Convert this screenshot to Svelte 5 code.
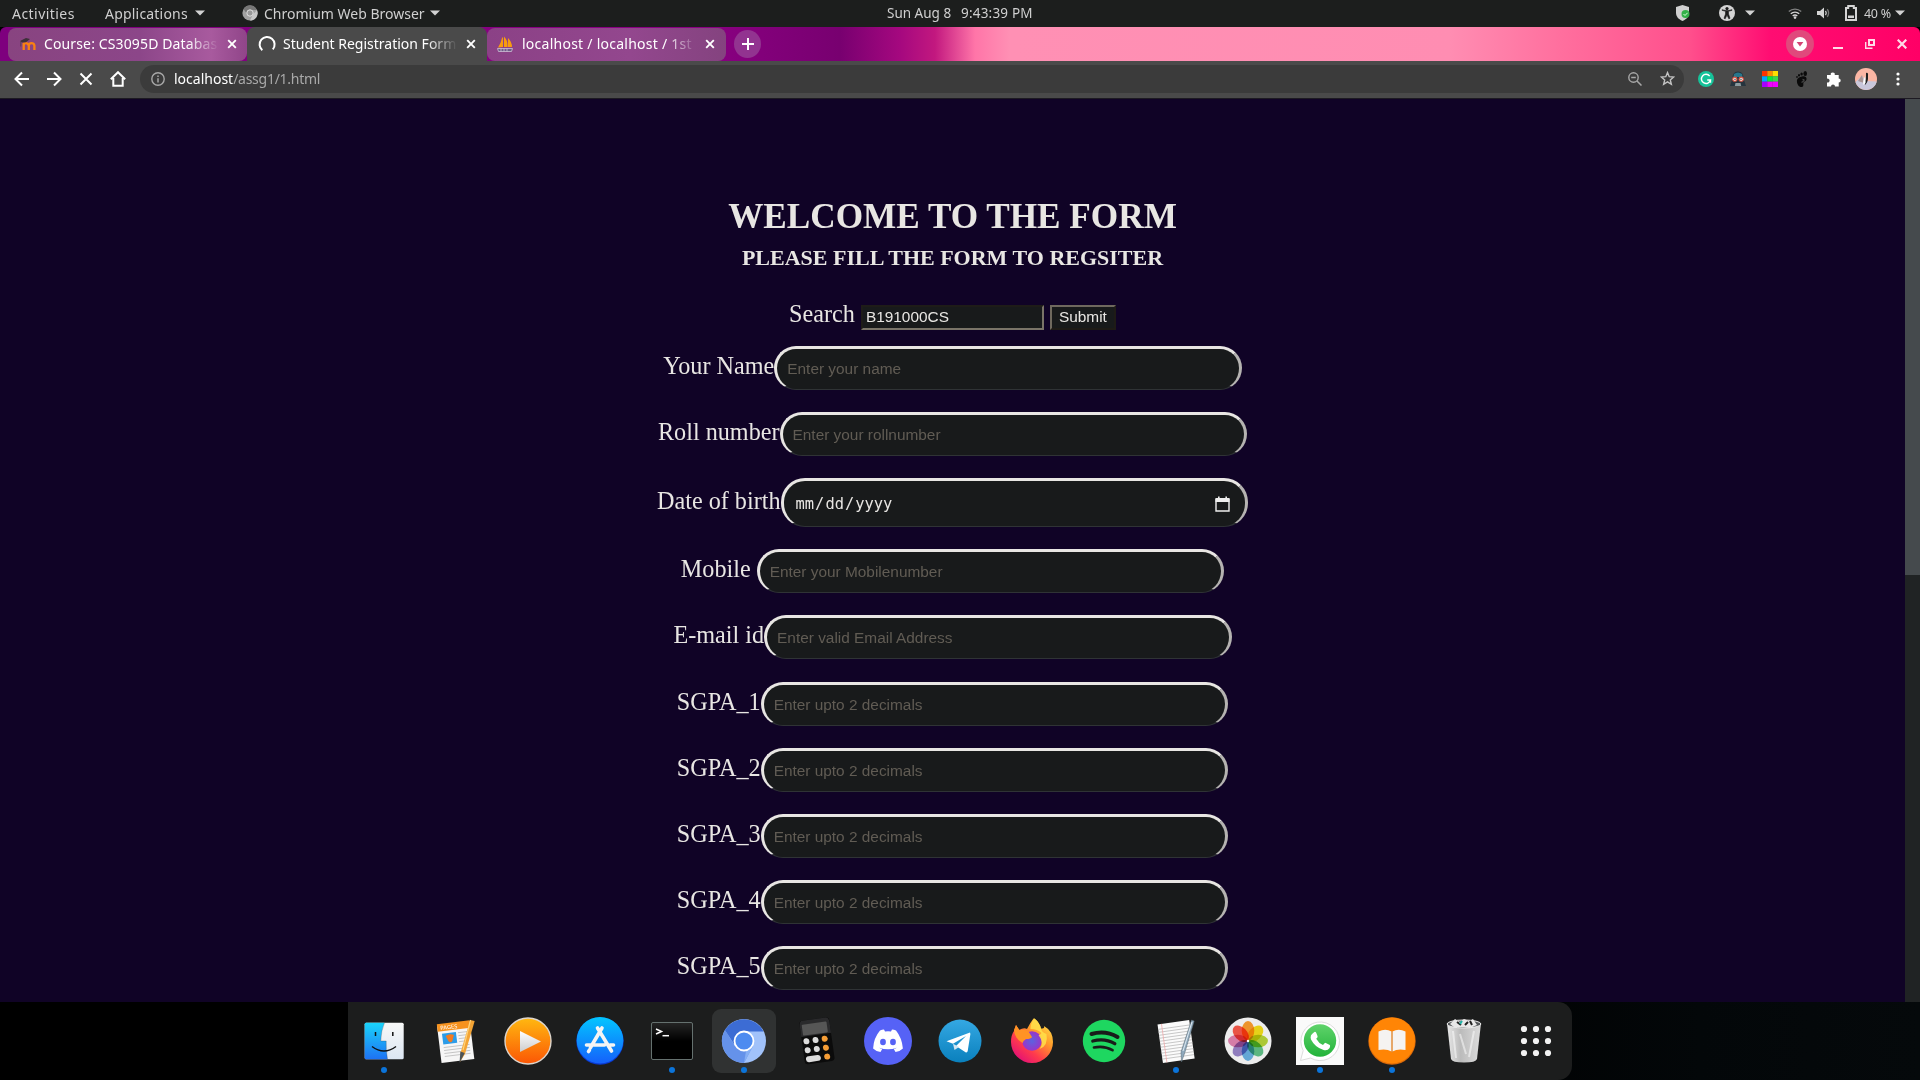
<script>
  const fields = [
    { label: 'Your Name', hint: 'Enter your name' },
    { label: 'Roll number', hint: 'Enter your rollnumber' },
    { label: 'Date of birth', date: true },
    { label: 'Mobile\u00a0', hint: 'Enter your Mobilenumber' },
    { label: 'E-mail id', hint: 'Enter valid Email Address' },
    ...[1, 2, 3, 4, 5].map((n) => ({ label: `SGPA_${n}`, hint: 'Enter upto 2 decimals' })),
  ];
  const apps = [
    { id: 'finder', open: true }, { id: 'pages' }, { id: 'player' }, { id: 'store' },
    { id: 'terminal', open: true }, { id: 'chromium', open: true, active: true },
    { id: 'calculator' }, { id: 'discord' }, { id: 'telegram' }, { id: 'firefox' },
    { id: 'spotify' }, { id: 'notes', open: true }, { id: 'photos' },
    { id: 'whatsapp', open: true }, { id: 'books', open: true }, { id: 'trash' }, { id: 'grid' },
  ];
  const petals = ['#ff9f2e', '#f7e11a', '#b9d83a', '#62c48a', '#6cb4e6', '#9a86cc', '#e587b4', '#fb5a4a'];
  const swatches = ['#ff3200', '#ff8a00', '#ffdc00', '#00a8ff', '#0be63c', '#3ad94a', '#a800ff', '#f000ff', '#f000ff'];
</script>

{#snippet caret()}
  <svg class="caret" viewBox="0 0 10 6"><path d="M0 .5h10L5 5.5z" fill="#d2d2d2" /></svg>
{/snippet}
{#snippet cross()}
  <svg class="cross" viewBox="0 0 10 10"><path d="M1.2 1.2l7.6 7.6M8.8 1.2L1.2 8.8" stroke="#fff" stroke-width="1.9" /></svg>
{/snippet}

<div class="screen">
  <header class="panel">
    <span class="activities">Activities</span>
    <span class="applications">Applications</span>
    {@render caret()}
    <svg class="chromelet" viewBox="0 0 16 16">
      <circle cx="8" cy="8" r="7.6" fill="#a2a2a2" /><path d="M1.5 4A7.6 7.6 0 0 1 15 5H8L5 9z" fill="#777" /><path d="M15 5a7.6 7.6 0 0 1-7 10.600l3-6z" fill="#c8c8c8" />
      <circle cx="8" cy="8" r="3.2" fill="#999" stroke="#e2e2e2" />
    </svg>
    <span class="appname">Chromium Web Browser</span>
    {@render caret()}
    <span class="day">Sun Aug 8</span><span class="clock">9:43:39 PM</span>
    <div class="tray">
      <svg class="shield" viewBox="0 0 14 16"><path d="M6.500 0 13 2v6c0 3-2 6-6.500 8C2 14 0 11 0 8V2z" fill="#d0d0d0" /><circle cx="9.500" cy="9" r="4" fill="#34b14a" /><path d="M7.500 9l1.500 1.500L11.600 7.800" stroke="#d8ffd8" fill="none" /></svg>
      <svg class="access" viewBox="0 0 16 16"><circle cx="8" cy="8" r="8" fill="#d4d4d4" /><circle cx="8" cy="3.600" r="1.600" fill="#1c1c1c" /><path d="M3 5.300l3.500 1v2.700L5 13.300l1.200.5L8 10l1.800 3.800 1.200-.5L9.500 9V6.300l3.500-1v-.6L9 5.600H7L3 4.700z" fill="#1c1c1c" stroke="#1c1c1c" stroke-width=".6" /></svg>
      {@render caret()}
      <svg class="wifi" viewBox="0 0 14 12"><g fill="none" stroke="#d4d4d4" stroke-width="1.400"><path d="M.8 4.600a9 9 0 0 1 12.400 0" opacity=".55" /><path d="M2.800 6.800a6 6 0 0 1 8.400 0" /><path d="M4.700 9a3.500 3.500 0 0 1 4.600 0" /></g><circle cx="7" cy="10.600" r="1.300" fill="#d4d4d4" /></svg>
      <svg class="volume" viewBox="0 0 13 12"><path d="M0 4h3l4-3.500v11L3 8H0z" fill="#d4d4d4" /><path d="M8.500 3.800q1.500 2.200 0 4.400" fill="none" stroke="#d4d4d4" stroke-width="1.300" /><path d="M10.300 2.200q2.600 3.800 0 7.600" fill="none" stroke="#777" stroke-width="1.300" /></svg>
      <svg class="battery" viewBox="0 0 12 16"><path d="M1 3h2.200V1h5.600v2H11v12H1z" fill="none" stroke="#d4d4d4" stroke-width="2" /><path d="M3 10.500h6V13H3z" fill="#d4d4d4" /></svg>
      <span class="charge">40 %</span>
      {@render caret()}
    </div>
  </header>

  <nav class="tabs">
    <div class="tab first">
      <svg class="fav" viewBox="0 0 16 16"><path d="M3.700 14V6.500M3.700 14V9.500q.2-2.300 2.200-2.300t2.900 2.300V14M8.800 9.500q.3-2.300 2.700-2.300t2.900 2.300V14" fill="none" stroke="#f98012" stroke-width="2.300" /><path d="M0 5l6-3 4 1-4 3.200-4 .2z" fill="#3d3039" /><path d="M.8 5.500v5" stroke="#5b4350" /></svg>
      <span class="caption c1">Course: CS3095D Databas</span>{@render cross()}
    </div>
    <div class="tab active">
      <svg class="spin" viewBox="0 0 18 18"><path d="M4.300 15.200A7.500 7.500 0 1 1 14.800 14.300" fill="none" stroke="#fff" stroke-width="2" /></svg>
      <span class="caption c2">Student Registration Form</span>{@render cross()}
    </div>
    <div class="tab third">
      <svg class="fav" viewBox="0 0 16 16"><path d="M6 1v10L1 11.500Q4 7 5 2M7 .5q4 4 3.500 10.500H7M11 2q4 4 4 9h-4" fill="#f89c0e" /><path d="M.500 12.500l1 3h13l1-3zM4 12.500v3m3-3v3m3-3v3" fill="#6e5c88" stroke="#d8cfe0" stroke-width=".7" /></svg>
      <span class="caption c3">localhost / localhost / 1st</span>{@render cross()}
    </div>
    <div class="plus"><svg viewBox="0 0 12 12"><path d="M6 0v12M0 6h12" stroke="#fff" stroke-width="2" /></svg></div>
    <div class="winctl">
      <svg class="drop" viewBox="0 0 28 28"><circle cx="14" cy="14" r="14" fill="#e0497c" /><circle cx="14" cy="14" r="7" fill="#fff" /><path d="M10.600 12h6.800L14 16.600z" fill="#d44373" /></svg>
      <svg class="w10" viewBox="0 0 10 10"><path d="M0 9h10" stroke="#ffdbe8" stroke-width="2" /></svg>
      <svg class="w10" viewBox="0 0 10 10"><path d="M4 1h5v5H4z" fill="none" stroke="#ffdbe8" stroke-width="2" /><path d="M.7 3v6.300H7.500" fill="none" stroke="#ffdbe8" stroke-width="1.400" /></svg>
      <svg class="w10" viewBox="0 0 10 10"><path d="M.7.7l8.600 8.600M9.300.7L.7 9.300" stroke="#ffdbe8" stroke-width="2.200" /></svg>
    </div>
  </nav>

  <div class="toolbar">
    <svg class="nav" viewBox="0 0 16 16"><path d="M15 8H2M8 1.500L1.500 8 8 14.500" /></svg>
    <svg class="nav" viewBox="0 0 16 16"><path d="M1 8h13M8 1.500L14.500 8 8 14.500" /></svg>
    <svg class="nav" viewBox="0 0 16 16"><path d="M2.500 2.500l11 11M13.500 2.500l-11 11" /></svg>
    <svg class="nav" viewBox="0 0 16 16"><path d="M.8 8.200L8 1.200l7.200 7M3.300 7v7.800h9.400V7" /></svg>
    <div class="omnibox">
      <svg class="info" viewBox="0 0 14 14"><circle cx="7" cy="7" r="6.200" fill="none" stroke="#a8a8a8" stroke-width="1.400" /><path d="M7 6.200v4.300M7 3.400v1.500" stroke="#a8a8a8" stroke-width="1.500" /></svg>
      <span class="url"><b>localhost</b>/assg1/1.html</span>
      <svg class="mag" viewBox="0 0 14 14"><circle cx="5.500" cy="5.500" r="4.700" fill="none" stroke="#a8a8a8" stroke-width="1.400" /><path d="M3.200 5.500h4.600M9 9l4.500 4.500" stroke="#a8a8a8" stroke-width="1.500" /></svg>
      <svg class="star" viewBox="0 0 14 14"><path d="M7 1.500l1.600 3.800 4.200.3-3.200 2.700 1 4.100L7 10.200l-3.600 2.200 1-4.100L1.200 5.600l4.200-.3z" fill="none" stroke="#c4c4c4" stroke-width="1.300" /></svg>
    </div>
    <div class="exts">
      <svg viewBox="0 0 16 16"><circle cx="8" cy="8" r="8" fill="#15c39a" /><path d="M11.700 5.100A4.600 4.600 0 1 0 12.500 9H9.200M12.500 9v2.700" fill="none" stroke="#fff" stroke-width="1.400" /></svg>
      <svg viewBox="0 0 16 16"><path d="M8 .5c4 0 5.500 3 5.500 7L16 15H0l2.500-7.500c0-4 1.500-7 5.500-7z" fill="#26343e" /><path d="M4 3q4-3 8 0l.5 3h-9z" fill="#28778c" /><path d="M5.500 12h5l.7 3H4.800z" fill="#8b9a9e" /><circle cx="4.800" cy="8.200" r="2.100" fill="#fff" stroke="#d8513f" stroke-width="1.100" /><circle cx="11.200" cy="8.200" r="2.100" fill="#fff" stroke="#d8513f" stroke-width="1.100" /><circle cx="5" cy="8.200" r=".7" fill="#222" /><circle cx="11" cy="8.200" r=".7" fill="#222" /></svg>
      <svg viewBox="0 0 16 16">{#each swatches as c, i}<rect x={(i % 3) * 5.33} y={Math.floor(i / 3) * 5.33} width="5.400" height="5.400" fill={c} />{/each}</svg>
      <svg viewBox="0 0 16 16"><path d="M8 5.500c3-.8 5 .6 4.500 3-.4 2-3 2-3.200 3.500-.1 1 .7 3.500-1.500 4C4.500 16.500 2.500 12 3 9c.4-2 2.500-3 5-3.500z" fill="#0a0a0a" /><path d="M8.500 8.500q2 0 1.500 1.300L7.500 11.500" stroke="#444" stroke-width="1.300" fill="none" /><ellipse cx="11.200" cy="2.500" rx="1.800" ry="2.500" fill="#0a0a0a" /><ellipse cx="7.600" cy="3" rx="1.200" ry="1.600" fill="#0a0a0a" /><ellipse cx="5" cy="4.300" rx="1" ry="1.300" fill="#0a0a0a" /><ellipse cx="3" cy="6" rx=".8" ry="1.100" fill="#0a0a0a" /></svg>
      <svg viewBox="0 0 16 16"><path d="M1 4h3.800a2 2 0 1 1 3.900 0h4v3.600a2 2 0 1 1 0 4V15.500H9a2 2 0 1 0-4 0H1V11.500a2 2 0 1 0 0-3.800z" fill="#fff" /></svg>
      <svg class="avatar" viewBox="0 0 22 22"><circle cx="11" cy="11" r="11" fill="#fbb6a4" /><path d="M.5 14L7 8l4 5 10.800.5A11 11 0 0 1 .5 14z" fill="#c9c7db" /><path d="M3 13l4-6 2 8z" fill="#a89493" /><path d="M11 5q2.500-1 2 3 .5 6-3 9-1-3 .3-6 1-3 .7-6z" fill="#222" /><path d="M10.300 8q-3 5-1.800 9l2-2q.5-4-.2-7z" fill="#fff" /></svg>
      <svg class="menu" viewBox="0 0 4 14"><circle cx="2" cy="2" r="1.600" /><circle cx="2" cy="7" r="1.600" /><circle cx="2" cy="12" r="1.600" /></svg>
    </div>
  </div>

  <div class="viewport">
    <main>
      <h1>WELCOME TO THE FORM</h1>
      <h3>PLEASE FILL THE FORM TO REGSITER</h3>
      <div class="search">
        <span class="label">Search</span>
        <input class="query" value="B191000CS" />
        <button>Submit</button>
      </div>
      {#each fields as f}
        <div class="row" class:tall={f.date}>
          <span class="label">{f.label}</span>
          {#if f.date}
            <div class="field date">
              <span class="mask">mm<i>/</i>dd<i>/</i>yyyy</span>
              <svg viewBox="0 0 15 16"><path d="M1 3.500h13V15H1z" fill="none" stroke="#eee" stroke-width="1.400" /><path d="M.5 2h14v4H.5zM3 .5h1.600V3H3zM10.400.5H12V3h-1.600z" fill="#eee" /></svg>
            </div>
          {:else}
            <input class="field" placeholder={f.hint} />
          {/if}
        </div>
      {/each}
    </main>
    <div class="scroll"><div class="thumb"></div></div>
  </div>

  <footer>
    <div class="dock">
      {#each apps as app}
        <div class="app" class:current={app.active}>
          <svg viewBox="0 0 48 48">
            {#if app.id === 'finder'}
              <defs><linearGradient id="fb" x2="0" y2="1"><stop stop-color="#1ad4fb" /><stop offset="1" stop-color="#1e72f3" /></linearGradient><linearGradient id="fw" x2="0" y2="1"><stop stop-color="#f8f8f8" /><stop offset="1" stop-color="#dce6f2" /></linearGradient></defs>
              <rect x="4.700" y="5.700" width="39" height="36.600" rx="1.500" fill="url(#fw)" />
              <path d="M6 5.700h18.500Q21 14 20.800 24h5.400q-.4 8 1.300 18.300H6q-1.300 0-1.300-1.300V7q0-1.300 1.300-1.300z" fill="url(#fb)" />
              <path d="M24.500 5.700Q21 14 20.800 24h5.400q-.4 8 1.300 18.300" fill="none" stroke="#333" stroke-width=".5" opacity=".5" />
              <path d="M15.500 15v4M32.800 15v4M12 29.500q12 9 24 0" fill="none" stroke="#111" stroke-width="1.500" />
            {:else if app.id === 'pages'}
              <g transform="rotate(-7 24 24)"><rect x="7" y="6" width="33" height="38" fill="#f6f6f6" /><rect x="7" y="5" width="33" height="7.500" fill="#f6921e" /><text x="10" y="11.300" font-size="5.600" font-family="Lato" fill="#fff">PAGES</text><rect x="11" y="15" width="14" height="11" fill="#2c9ce8" /><path d="M15 18q4-2 7 0l-2 5q-1 2-3 0z" fill="#f57b1e" stroke="#f57b1e" /><path d="M27 16h10M27 19h10M27 22h10M27 25h10M11 29h26M11 32h26M11 35h26M11 38h26" stroke="#bbb" stroke-width=".8" /></g>
              <path d="M38.200 3l4.500 1L33 37l-5 8 .5-9z" fill="#f3a435" /><path d="M38.500 3L31 33" stroke="#ffd27a" stroke-width="1.200" /><path d="M28.400 34.500l4.300 1.500-5.200 10z" fill="#4b5358" />
            {:else if app.id === 'player'}
              <defs><linearGradient id="pl" x2="0" y2="1"><stop stop-color="#ffb810" /><stop offset="1" stop-color="#fb5605" /></linearGradient><linearGradient id="pw" x2="0" y2="1"><stop stop-color="#fff" /><stop offset="1" stop-color="#ccc" /></linearGradient></defs>
              <circle cx="24" cy="24" r="23" fill="url(#pl)" stroke="#ddd5cc" stroke-width="1.400" /><path d="M16 14v21l21-10.500z" fill="url(#pw)" />
            {:else if app.id === 'store'}
              <defs><linearGradient id="st" x2="0" y2="1"><stop stop-color="#02c6ff" /><stop offset="1" stop-color="#1560fb" /></linearGradient></defs>
              <circle cx="24" cy="24" r="23.700" fill="#0939d2" /><circle cx="24" cy="23.300" r="23.300" fill="url(#st)" /><g stroke="#f4f4f4" stroke-width="3.600" stroke-linecap="round" fill="none"><path d="M26 11L14.500 30.500M21.500 11L35.500 34M10.500 28h18M34 28h3.500M13.500 33l-1 1.500" /></g>
            {:else if app.id === 'terminal'}
              <defs><linearGradient id="te" x2="0" y2="1"><stop stop-color="#252525" /><stop offset=".5" stop-color="#000" /></linearGradient></defs>
              <rect x="3.500" y="5.500" width="41" height="37" rx="1.500" fill="url(#te)" stroke="#65716f" /><path d="M8 12l5.500 2.500L8 17" fill="none" stroke="#fff" stroke-width="1.500" /><path d="M14.500 18.700H21" stroke="#fff" stroke-width="1.500" />
            {:else if app.id === 'chromium'}
              <circle cx="24" cy="24" r="22" fill="#a1c2fa" /><path d="M4.900 13A22 22 0 0 0 24 46L33 29H15z" fill="#6592ea" /><path d="M4.900 13A22 22 0 0 1 43.500 14.500H24L14 27z" fill="#3c6cd4" /><path d="M24 46l9-17-7 5z" fill="#86aff4" /><circle cx="24" cy="24" r="9.500" fill="#4d8bf0" stroke="#fff" stroke-width="1.800" />
            {:else if app.id === 'calculator'}
              <g transform="rotate(-8 24 24)"><rect x="10" y="2" width="30" height="44" rx="3" fill="#0b0b0b" /><path d="M10 8q0-6 3-6h24q3 0 3 6v10H10z" fill="#2a2a2c" /><rect x="12" y="6" width="25" height="11" rx="1" fill="#565656" />{#each [0, 1] as r}{#each [0, 1, 2] as c}<circle cx={14.500 + c * 9.200} cy={23 + r * 9} r="3" fill={c === 2 ? '#f59d36' : '#dcdcdc'} />{/each}{/each}<rect x="11.500" y="38" width="15" height="6" rx="3" fill="#dcdcdc" /><circle cx="32.900" cy="41" r="3" fill="#f59d36" /></g>
            {:else if app.id === 'discord'}
              <circle cx="24" cy="24" r="24" fill="#5662f6" /><path d="M16 13.500q2-1 4-1l1 2q3-.4 6 0l1-2q2 0 4 1Q38 21 38.900 31.500 36 34.500 31.500 35l-1.700-3q2-.6 3-1.300-8.800 3.300-17.600 0 1 .7 3 1.300l-1.700 3Q12 34.500 9.100 31.500 9.600 21 16 13.500z" fill="#fff" /><ellipse cx="19" cy="25" rx="2.900" ry="3.200" fill="#5662f6" /><ellipse cx="29" cy="25" rx="2.900" ry="3.200" fill="#5662f6" />
            {:else if app.id === 'telegram'}
              <defs><linearGradient id="tg" x2="0" y2="1"><stop stop-color="#34a8e3" /><stop offset="1" stop-color="#0a80bd" /></linearGradient></defs>
              <circle cx="24" cy="24" r="21.500" fill="url(#tg)" /><path d="M34 15.500L10.500 24.300l6.500 2.500L30 19 20 29l9.500 6.300q1.800.7 2.200-1.300l2.700-17z" fill="#fff" /><path d="M17 26.800L18.500 33l4.500-3z" fill="#d3e6f2" />
            {:else if app.id === 'firefox'}
              <defs><linearGradient id="fx" x1="1" y1="0" x2=".2" y2="1"><stop stop-color="#fff44f" /><stop offset=".4" stop-color="#ff9a2a" /><stop offset=".7" stop-color="#ff3b4c" /><stop offset="1" stop-color="#e00b7b" /></linearGradient><radialGradient id="fp"><stop stop-color="#5b62e0" /><stop offset="1" stop-color="#9a35c8" /></radialGradient></defs>
              <path d="M26.500 1.500q5 4 6.500 10 4 0 3-2.500Q45 14 45 25a21 21 0 0 1-42 0q0-7 3-11l2-6 3 5q5-3 8-1 3-6 6.500-10.500z" fill="url(#fx)" /><circle cx="24" cy="24" r="9.800" fill="url(#fp)" /><path d="M6 13l2-5 3.500 5q6-1 9 1.500L24 20q-1 2-6 2-3 2-3.500 4Q7 22 6 13z" fill="#ff9325" /><path d="M26.500 1.500q-4 4-4 10.500 7 0 11 4-1 2-3 2 6 8 1 14 9-3 7-15-5-2-5.500-5.500-1.500-6-6.500-10z" fill="#ffe04a" opacity=".85" />
            {:else if app.id === 'spotify'}
              <circle cx="24" cy="24" r="21.200" fill="#1ed760" /><g fill="none" stroke="#191c1a" stroke-linecap="round"><path d="M11.500 17q14-4 26 3" stroke-width="4" /><path d="M12.800 24q12-3.300 22 2.700" stroke-width="3.300" /><path d="M14 30.500q10-2.300 18.500 2.700" stroke-width="2.700" /></g>
            {:else if app.id === 'notes'}
              <g transform="rotate(-8 24 24)"><rect x="8" y="5" width="32" height="39" fill="#fbfbfb" />{#each Array(11) as _, i}<path d={`M8 ${10 + i * 3}h32`} stroke="#b5b5b5" stroke-width=".7" />{/each}<path d="M12 5v39" stroke="#f2a7a7" stroke-width=".7" /></g>
              <path d="M39.500 3l2.700 1L33 35l-3.500 10-.5-10z" fill="#8fa9bd" stroke="#55646f" stroke-width=".5" /><path d="M40 5L31 34" stroke="#dfe9f0" />
            {:else if app.id === 'photos'}
              <circle cx="24" cy="24" r="23.500" fill="#ededed" /><g>{#each petals as p, i}<ellipse class="petal" cx="24" cy="13.800" rx="6.300" ry="9.700" fill={p} transform={`rotate(${i * 45} 24 24)`} />{/each}</g><circle cx="24" cy="24" r="1.200" fill="#fff" />
            {:else if app.id === 'whatsapp'}
              <defs><linearGradient id="wa" x2="0" y2="1"><stop stop-color="#5fd36b" /><stop offset="1" stop-color="#23b33a" /></linearGradient></defs>
              <rect width="48" height="48" fill="#fafafa" /><path d="M4.500 43.500l2.700-10A19.300 19.300 0 1 1 14.500 41z" fill="#fff" stroke="#ddd" /><circle cx="24" cy="23.500" r="16.200" fill="url(#wa)" /><path d="M17.800 15.500q1.500-1.500 2.500.5l1.300 3.200q.3 1-1.400 2.600 2.500 4.500 6.800 6.300 2-2.500 2.800-2.200l4 2q.8.500-.2 3-2 3-6 2Q19 30.500 15 22.500q-1.500-4.500 2.800-7z" fill="#fff" />
            {:else if app.id === 'books'}
              <circle cx="24" cy="24" r="23.700" fill="#d9690a" /><circle cx="24" cy="23.400" r="23" fill="#ff8505" /><path d="M10.500 14.500q7-3.500 13 0v20q-5-3-13-1.500zM24.500 14.500q6-3.500 13 0V33q-8-1.500-13 1.500z" fill="#f5f3f1" /><path d="M24 14.500v21" stroke="#c98a53" stroke-width=".8" />
            {:else if app.id === 'trash'}
              <defs><linearGradient id="tr"><stop stop-color="#e8e8e8" /><stop offset=".4" stop-color="#bbb" /><stop offset="1" stop-color="#ddd" /></linearGradient></defs>
              <path d="M7 6h34l-4 36q-1 3.500-13 3.500T11 42z" fill="url(#tr)" /><ellipse cx="24" cy="7" rx="17" ry="4" fill="#55585a" stroke="#eee" /><path d="M10 7l5-5 5 3 4-3 5 2 4-2 4 6-7 3-9-1-6 1z" fill="#e8e8e8" /><path d="M17 5l4 3M30 4l2 4M25 8l3-3" stroke="#222" stroke-width="2" /><path d="M20 7l2-3" stroke="#1fb5a8" stroke-width="2" /><path d="M13 14l3 27M20 17l6 20M34 14l-5 26" stroke="#fff" opacity=".5" stroke-width="2" />
            {:else}
              {#each [12, 24, 36] as y}{#each [12, 24, 36] as x}<circle cx={x} cy={y} r="3.100" fill="#f2f2f2" />{/each}{/each}
            {/if}
          </svg>
          <span class="pip" class:on={app.open}></span>
        </div>
      {/each}
    </div>
  </footer>
</div>

<style>
  :global(body) { margin: 0; background: #000; overflow: hidden; }
  svg { display: block; flex: none; }
  .screen { width: 1920px; height: 1080px; display: flex; flex-direction: column; font-family: "Noto Sans", sans-serif; font-size: 14px; overflow: hidden; }
  .panel { height: 27px; flex: none; display: flex; align-items: center; background: #1c1e1d; color: #cfcfcf; white-space: nowrap; box-sizing: border-box; padding: 0 0 1px 12px; }
  .caret { width: 10px; height: 6px; }
  .activities { width: 93px; letter-spacing: .45px; }
  .applications { width: 90px; letter-spacing: .2px; }
  .chromelet { width: 16px; height: 16px; margin: 0 6px 0 37px; }
  .appname { width: 166px; }
  .day { width: 74px; margin-left: 447px; font-size: 13.500px; }
  .clock { width: 100px; font-size: 13.500px; letter-spacing: .2px; }
  .tray { display: flex; align-items: center; margin-left: 615px; }
  .shield { width: 14px; height: 16px; }
  .access { width: 16px; height: 16px; margin: 0 10px 0 29px; }
  .wifi { width: 14px; height: 12px; margin-left: 33px; }
  .volume { width: 13px; height: 12px; margin-left: 15px; }
  .battery { width: 12px; height: 16px; margin-left: 15px; }
  .charge { width: 31px; margin-left: 7px; font-size: 12.500px; letter-spacing: -.3px; }

  .tabs { height: 34px; flex: none; display: flex; padding-left: 8px; box-sizing: border-box; border-radius: 6px 6px 0 0; color: #fff; background: linear-gradient(90deg, #7e007e 0, #8a0082 700px, #780070 840px, #a5087f 900px, #c2187f 935px, #ff75a8 975px, #ff90b4 1010px, #ff8db2 1450px, #ff6f9e 1560px, #ff4f8c 1690px, #ff0d72 1770px, #ff0066 1920px); }
  .tab { height: 33px; margin-top: 1px; box-sizing: border-box; display: flex; align-items: center; border-radius: 8px; }
  .first { width: 239px; padding: 0 10px 2px 12px; background: linear-gradient(90deg, #884480, #8c4689 55%, #a85a9e 85%, #904589); }
  .active { width: 240px; height: 34px; margin-top: 0; padding: 0 11px 1px 11px; background: #4a4a4a; border-radius: 8px 8px 0 0; }
  .third { width: 239px; padding: 0 11px 2px 10px; background: linear-gradient(90deg, #8b4186, #93478e 60%, #84437f); }
  .fav { width: 16px; height: 16px; margin-right: 9px; }
  .first .fav { margin-right: 8px; }
  .spin { width: 18px; height: 18px; margin-right: 7px; }
  .caption { width: 175px; overflow: hidden; white-space: nowrap; margin-right: auto; mask-image: linear-gradient(90deg, #000 82%, transparent); }
  .c1 { letter-spacing: .13px; }
  .c3 { letter-spacing: .25px; }
  .cross { width: 10px; height: 10px; }
  .plus { width: 27px; height: 28px; margin: 3px 0 0 8px; border-radius: 50%; background: #923390; display: grid; place-items: center; }
  .plus svg { width: 12px; height: 12px; }
  .winctl { margin-left: auto; display: flex; align-items: center; padding-right: 13px; }
  .drop { width: 28px; height: 28px; margin-right: 19px; }
  .w10 { width: 10px; height: 10px; margin-left: 22px; }
  .drop + .w10 { margin-left: 0; }
  .drop { margin-left: -1px; }

  .toolbar { height: 38px; flex: none; box-sizing: border-box; padding: 0 20px 2px 14px; background: #4a4a4a; border-bottom: 1px solid #1d1a22; display: flex; align-items: center; }
  .nav { width: 16px; height: 16px; margin-right: 16px; fill: none; stroke: #fff; stroke-width: 2; }
  .omnibox { width: 1544px; height: 28px; margin-left: -2px; border-radius: 14px; background: #3b3b3b; box-sizing: border-box; padding: 0 9px 0 11px; display: flex; align-items: center; flex: none; }
  .info { width: 14px; height: 14px; }
  .url { margin: 0 auto 0 9px; color: #a9a9a9; letter-spacing: -.27px; }
  .url b { font-weight: 400; color: #fff; letter-spacing: 0; }
  .mag { width: 14px; height: 14px; margin-right: 18px; }
  .star { width: 15px; height: 15px; }
  .exts { display: flex; align-items: center; gap: 16px; margin-left: 14px; }
  .exts svg { width: 16px; height: 16px; }
  .exts .avatar { width: 22px; height: 22px; margin: 0 3px 0 -3px; }
  .exts .menu { width: 4px; height: 14px; fill: #fff; }

  .viewport { height: 903px; flex: none; display: flex; background: #100326; }
  main { flex: 1; font-family: "Liberation Serif", serif; color: #e8e6e3; text-align: center; overflow: hidden; }
  h1 { margin: 98px 0 0; font-size: 35.200px; line-height: 40px; }
  h3 { margin: 8px 0 0; font-size: 22px; line-height: 26px; }
  .search { height: 25px; margin: 30px 0 20px; display: flex; justify-content: center; align-items: baseline; }
  .label { font-size: 24.200px; line-height: 25px; }
  .query { width: 183px; height: 25px; box-sizing: border-box; margin: 0 6px; padding: 0 3px; border: 2px solid; border-color: #1e1c18 #7a7468 #7a7468 #1e1c18; background: #181a1b; color: #e8e6e3; font: 15.400px "Liberation Sans", sans-serif; }
  button { width: 66px; height: 25px; box-sizing: border-box; padding: 0; border: 2px solid; border-color: #6f695e #1e1b16 #1e1b16 #6f695e; background: #181a1b; color: #e8e6e3; font: 15.400px "Liberation Sans", sans-serif; }
  .row { height: 66.200px; display: flex; justify-content: center; align-items: baseline; }
  .row.tall { height: 70.800px; }
  .field { width: 467.500px; height: 44px; box-sizing: border-box; padding: 0 10px; border: 3px solid; border-color: #e8e6e3 #b5b3b1 #2f3335 #e8e6e3; border-bottom-width: 1px; border-radius: 22px; background: #181a1b; color: #e8e6e3; font: 15.400px "Liberation Sans", sans-serif; }
  .field::placeholder { color: #615c54; opacity: 1; }
  .date { height: 49px; border-radius: 24px; padding: 0 15px 0 12px; display: flex; align-items: center; justify-content: space-between; }
  .mask { font: 15.400px "DejaVu Sans Mono", monospace; }
  .mask i { font-style: normal; margin: 0 1px; }
  .date svg { width: 15px; height: 16px; }
  .scroll { width: 15px; background: #202324; }
  .thumb { height: 476px; background: #454a4d; }

  footer { flex: 1; background: linear-gradient(90deg, #000 0 1400px, #030709 1700px, #05090b); display: flex; padding-left: 348px; }
  .dock { display: flex; height: 78px; border-radius: 0 14px 14px 0; background: #1c1d1d; }
  .app { width: 64px; height: 64px; margin: 7px 4px; padding-top: 8px; box-sizing: border-box; border-radius: 9px; display: flex; flex-direction: column; align-items: center; }
  .app svg { width: 48px; height: 48px; }
  .petal { mix-blend-mode: multiply; }
  .current { background: #303232; }
  .pip { width: 6px; height: 6px; margin-top: 2px; border-radius: 50%; flex: none; }
  .on { background: #0b74da; }
</style>
